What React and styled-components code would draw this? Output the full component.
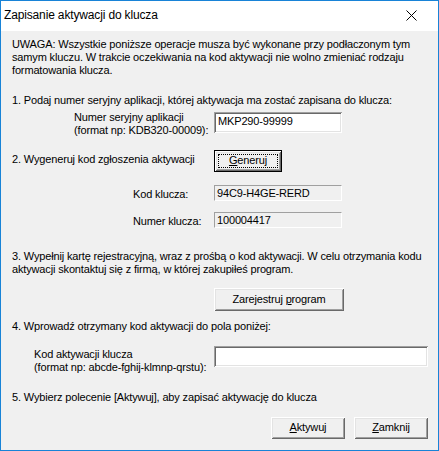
import React from 'react';
import styled, { createGlobalStyle } from 'styled-components';

const GlobalStyle = createGlobalStyle`
  html, body {
    margin: 0;
    padding: 0;
    background: #f0f0f0;
  }
`;

const Window = styled.div`
  width: 439px;
  height: 451px;
  box-sizing: border-box;
  border: 1px solid #1883d7;
  background: #f0f0f0;
  display: flex;
  flex-direction: column;
  color: #000;
  font-family: "Liberation Sans", Arial, sans-serif;
  font-size: 11px;
  letter-spacing: -0.15px;
`;

const TitleBar = styled.div`
  flex: none;
  height: 30px;
  box-sizing: border-box;
  background: #fff;
  display: flex;
  justify-content: space-between;
  align-items: flex-start;
  padding: 0 21px 0 3px;
`;

const Title = styled.div`
  margin-top: 7px;
  font-size: 12px;
  line-height: 14px;
`;

const CloseIcon = styled.svg`
  margin-top: 9px;
  width: 11px;
  height: 11px;
`;

const Body = styled.div`
  padding: 7px 10px 0 11px;
`;

const Text = styled.p`
  margin: ${p => p.$mt || 0}px 0 0;
  line-height: 13px;
`;

const Row = styled.div`
  display: grid;
  grid-template-columns: 202px auto;
  align-items: start;
  margin-top: ${p => p.$mt || 0}px;
`;

const Label = styled.div`
  padding-left: ${p => p.$indent || 0}px;
  padding-top: ${p => p.$top || 0}px;
  line-height: 13px;
`;

const Edit = styled.input`
  display: block;
  width: ${p => p.$w}px;
  height: 21px;
  margin: ${p => p.$top || 0}px 0 0;
  box-sizing: border-box;
  border: none;
  padding: 0 2px 4px 4px;
  background: #fff;
  box-shadow: inset 1px 1px #a0a0a0, inset -1px -1px #fff,
    inset 2px 2px #696969, inset -2px -2px #e3e3e3;
  font: inherit;
  letter-spacing: inherit;
  color: #000;
  outline: none;
`;

const ReadOnly = styled.div`
  width: 128px;
  height: 16px;
  box-sizing: border-box;
  border-style: solid;
  border-width: 1px;
  border-color: #a0a0a0 #fff #fff #a0a0a0;
  padding: 1px 0 0 2px;
  line-height: 13px;
`;

const Button = styled.button`
  display: flex;
  align-items: center;
  justify-content: center;
  width: ${p => p.$w}px;
  height: ${p => p.$h || 22}px;
  box-sizing: border-box;
  padding: 0 0 1px;
  background: #f0f0f0;
  border: ${p => (p.$default ? '1px solid #000' : 'none')};
  box-shadow: inset 1px 1px #fff, inset -1px -1px #696969,
    inset 2px 2px #e3e3e3, inset -2px -2px #a0a0a0;
  outline: ${p => (p.$default ? '1px dotted #000' : 'none')};
  outline-offset: -5px;
  font: inherit;
  letter-spacing: inherit;
  line-height: 13px;
  color: #000;
`;

const Key = styled.span`
  text-decoration: underline;
  text-underline-offset: 1px;
`;

const Footer = styled.div`
  display: flex;
  justify-content: flex-end;
  gap: 9px;
  margin-top: 13px;
`;

export default function App() {
  return (
    <>
      <GlobalStyle />
      <Window>
        <TitleBar>
          <Title>Zapisanie aktywacji do klucza</Title>
          <CloseIcon viewBox="0 0 11 11">
            <path d="M0.5 0.5 L10.5 10.5 M10.5 0.5 L0.5 10.5" stroke="#000" strokeWidth="1" fill="none" />
          </CloseIcon>
        </TitleBar>
        <Body>
          <Text>
            UWAGA: Wszystkie poniższe operacje musza być wykonane przy podłaczonym tym
            samym kluczu. W trakcie oczekiwania na kod aktywacji nie wolno zmieniać rodzaju
            formatowania klucza.
          </Text>

          <Text $mt={17}>
            1. Podaj numer seryjny aplikacji, której aktywacja ma zostać zapisana do klucza:
          </Text>
          <Row $mt={4}>
            <Label $indent={62}>
              Numer seryjny aplikacji
              <br />
              (format np: KDB320-00009):
            </Label>
            <Edit $w={128} $top={1} defaultValue="MKP290-99999" />
          </Row>

          <Row $mt={13}>
            <Label $top={3}>2. Wygeneruj kod zgłoszenia aktywacji</Label>
            <Button $w={68} $default>
              <Key>G</Key>eneruj
            </Button>
          </Row>

          <Row $mt={13}>
            <Label $indent={121} $top={3}>Kod klucza:</Label>
            <ReadOnly>94C9-H4GE-RERD</ReadOnly>
          </Row>
          <Row $mt={11}>
            <Label $indent={121} $top={3}>Numer klucza:</Label>
            <ReadOnly>100004417</ReadOnly>
          </Row>

          <Text $mt={22}>
            3. Wypełnij kartę rejestracyjną, wraz z prośbą o kod aktywacji. W celu otrzymania kodu
            <br />
            aktywacji skontaktuj się z firmą, w której zakupiłeś program.
          </Text>
          <Row $mt={12}>
            <div />
            <Button $w={130} $h={23}>
              Zarejestruj&nbsp;<Key>p</Key>rogram
            </Button>
          </Row>

          <Text $mt={9}>4. Wprowadź otrzymany kod aktywacji do pola poniżej:</Text>
          <Row $mt={13}>
            <Label $indent={22} $top={2}>
              Kod aktywacji klucza
              <br />
              (format np: abcde-fghij-klmnp-qrstu):
            </Label>
            <Edit $w={214} defaultValue="" />
          </Row>

          <Text $mt={17}>5. Wybierz polecenie [Aktywuj], aby zapisać aktywację do klucza</Text>

          <Footer>
            <Button $w={74}>
              <Key>A</Key>ktywuj
            </Button>
            <Button $w={74}>
              <Key>Z</Key>amknij
            </Button>
          </Footer>
        </Body>
      </Window>
    </>
  );
}
